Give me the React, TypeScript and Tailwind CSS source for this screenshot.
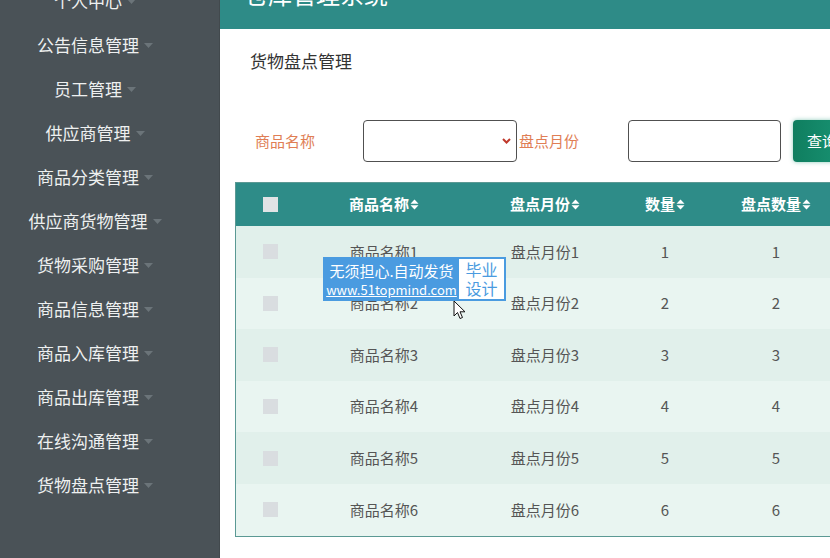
import React from "react";

const menu = [
  "个人中心",
  "公告信息管理",
  "员工管理",
  "供应商管理",
  "商品分类管理",
  "供应商货物管理",
  "货物采购管理",
  "商品信息管理",
  "商品入库管理",
  "商品出库管理",
  "在线沟通管理",
  "货物盘点管理",
];

const rows = [1, 2, 3, 4, 5, 6];

function SortIcon() {
  return (
    <svg width="9" height="11" viewBox="0 0 9 11" className="ml-[1px] inline-block shrink-0">
      <path d="M4.5 0.5 L8.5 4.8 L0.5 4.8 Z" fill="#ffffff" />
      <path d="M4.5 10.5 L8.5 6.2 L0.5 6.2 Z" fill="#ffffff" />
    </svg>
  );
}

function Caret() {
  return (
    <svg width="9" height="5" viewBox="0 0 9 5" className="ml-[5px] mt-[2px] shrink-0">
      <path d="M0 0 L9 0 L4.5 5 Z" fill="#6b7479" />
    </svg>
  );
}

export default function App() {
  const font = { fontFamily: '"Noto Sans CJK SC", "Noto Sans", sans-serif' };
  return (
    <div className="w-[830px] h-[558px] overflow-hidden bg-white" style={font}>
      <div className="flex -mt-[31px] h-[589px]">
        {/* Sidebar */}
        <div className="w-[220px] shrink-0 bg-[#4a5257] pt-[9px] border-r border-[#42494d]">
          {menu.map((m) => (
            <div key={m} className="w-[190px] h-[44px] flex items-center justify-center">
              <span className="text-[17px] text-[#eef0f0] leading-none whitespace-nowrap">{m}</span>
              <Caret />
            </div>
          ))}
        </div>
        {/* Main */}
        <div className="flex-1 min-w-0 overflow-hidden relative">
          <div className="h-[60px] bg-[#2e8b87] pl-[24px] pt-[13px]">
            <div className="text-[24px] leading-[24px] text-white whitespace-nowrap">仓库管理系统</div>
          </div>
          <div className="pl-[15px]">
            <div className="pl-[15px] pt-[22px] text-[17px] leading-[20px] text-[#333333]">货物盘点管理</div>
            <div className="mt-[49px] flex items-center h-[42px] whitespace-nowrap w-[640px]">
              <span className="shrink-0 ml-[20px] w-[108px] text-[15px] text-[#e07e55]">商品名称</span>
              <div className="shrink-0 w-[154px] h-[42px] border border-[#505050] rounded-[4px] flex items-center justify-end pr-[5px] bg-white">
                <svg width="9" height="6" viewBox="0 0 9 6">
                  <path d="M1 1 L4.5 4.5 L8 1" stroke="#c0392b" strokeWidth="2" fill="none" />
                </svg>
              </div>
              <span className="shrink-0 ml-[2px] w-[109px] text-[15px] text-[#e07e55]">盘点月份</span>
              <div className="shrink-0 w-[153px] h-[42px] border border-[#505050] rounded-[4px] bg-white" />
              <div className="shrink-0 ml-[12px] w-[70px] h-[42px] rounded-[4px] bg-gradient-to-r from-[#0f7e5f] to-[#1c9a7a] shadow-[0_0_4px_rgba(30,150,120,0.5)] flex items-center pl-[14px] text-[15px] text-white">
                查询
              </div>
            </div>
            <div className="mt-[20px] w-[620px] border border-[#5b9994]">
              <div className="flex h-[43px] bg-[#2e8c88] text-white text-[15px] font-bold items-center">
                <div className="w-[68px] flex justify-center shrink-0">
                  <div className="w-[15px] h-[15px] bg-[#e1e3e5]" />
                </div>
                <div className="shrink-0 w-[160px] flex justify-center items-center">商品名称<SortIcon /></div>
                <div className="shrink-0 w-[162px] flex justify-center items-center">盘点月份<SortIcon /></div>
                <div className="shrink-0 w-[78px] flex justify-center items-center">数量<SortIcon /></div>
                <div className="shrink-0 w-[144px] flex justify-center items-center">盘点数量<SortIcon /></div>
              </div>
              {rows.map((r) => (
                <div
                  key={r}
                  className={
                    "flex h-[51.6px] items-center text-[15px] text-[#555555] " +
                    (r % 2 === 1 ? "bg-[#e1f0eb]" : "bg-[#e9f5f1]")
                  }
                >
                  <div className="shrink-0 w-[68px] flex justify-center">
                    <div className="w-[15px] h-[15px] bg-[#d9dde0]" />
                  </div>
                  <div className="shrink-0 w-[160px] text-center">商品名称{r}</div>
                  <div className="shrink-0 w-[162px] text-center">盘点月份{r}</div>
                  <div className="shrink-0 w-[78px] text-center">{r}</div>
                  <div className="shrink-0 w-[144px] text-center">{r}</div>
                </div>
              ))}
            </div>
          </div>
          {/* Watermark overlay */}
          <div className="absolute left-[103px] top-[288px] flex h-[44px] bg-[#4a9be0] whitespace-nowrap">
            <div className="w-[136px] flex flex-col items-center justify-center pl-[1px]">
              <div className="text-[15px] leading-[20px] text-white">无须担心.自动发货</div>
              <div className="text-[13px] leading-[17px] text-white underline">www.51topmind.com</div>
            </div>
            <div className="m-[2px] ml-0 w-[45px] bg-white flex flex-col items-center justify-center text-[#4a9be0] text-[16px] leading-[19px]">
              <div>毕业</div>
              <div>设计</div>
            </div>
          </div>
          <svg className="absolute left-[233px] top-[331px]" width="14" height="21" viewBox="0 0 14 21">
            <path d="M1 1 L1 16 L4.5 12.5 L7 18.5 L9.5 17.5 L7 11.8 L12 11.8 Z" fill="#ffffff" stroke="#111111" strokeWidth="1" strokeLinejoin="round" />
          </svg>
        </div>
      </div>
    </div>
  );
}
